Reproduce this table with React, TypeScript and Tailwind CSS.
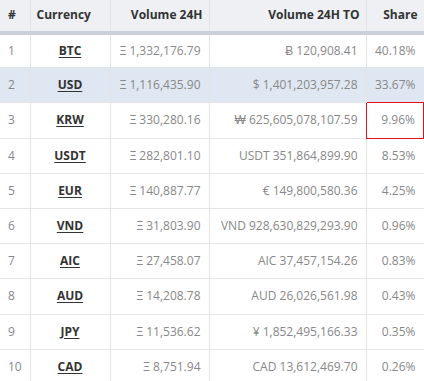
const rows = [
  { n: 1, cur: 'BTC', vol: 'Ξ 1,332,176.79', to: 'Ƀ 120,908.41', share: '40.18%' },
  { n: 2, cur: 'USD', vol: 'Ξ 1,116,435.90', to: '$ 1,401,203,957.28', share: '33.67%' },
  { n: 3, cur: 'KRW', vol: 'Ξ 330,280.16', to: '₩ 625,605,078,107.59', share: '9.96%' },
  { n: 4, cur: 'USDT', vol: 'Ξ 282,801.10', to: 'USDT 351,864,899.90', share: '8.53%' },
  { n: 5, cur: 'EUR', vol: 'Ξ 140,887.77', to: '€ 149,800,580.36', share: '4.25%' },
  { n: 6, cur: 'VND', vol: 'Ξ 31,803.90', to: 'VND 928,630,829,293.90', share: '0.96%' },
  { n: 7, cur: 'AIC', vol: 'Ξ 27,458.07', to: 'AIC 37,457,154.26', share: '0.83%' },
  { n: 8, cur: 'AUD', vol: 'Ξ 14,208.78', to: 'AUD 26,026,561.98', share: '0.43%' },
  { n: 9, cur: 'JPY', vol: 'Ξ 11,536.62', to: '¥ 1,852,495,166.33', share: '0.35%' },
  { n: 10, cur: 'CAD', vol: 'Ξ 8,751.94', to: 'CAD 13,612,469.70', share: '0.26%' },
]

export default function App() {
  return (
    <div className="w-[424px] h-[381px] overflow-hidden bg-white font-['Open_Sans',sans-serif] text-[12px]">
      <table className="w-full border-collapse table-fixed">
        <colgroup>
          <col className="w-[30px]" />
          <col className="w-[80px]" />
          <col className="w-[99px]" />
          <col className="w-[157px]" />
          <col />
        </colgroup>
        <thead>
          <tr className="h-[32.5px] bg-[#eef0f4] text-[#333] border-b-4 border-[#c9d0dc]">
            <th className="px-2 text-left font-bold">#</th>
            <th className="px-1.5 text-left font-bold border-l border-[#e2e4ea]">Currency</th>
            <th className="px-1.5 text-right font-bold border-l border-[#e2e4ea]">Volume 24H</th>
            <th className="px-1.5 text-right font-bold border-l border-[#e2e4ea]">Volume 24H TO</th>
            <th className="px-1.5 text-right font-bold border-l border-[#e2e4ea]">Share</th>
          </tr>
        </thead>
        <tbody className="text-[#888]">
          {rows.map((r) => (
            <tr key={r.n} className={`h-[35.2px] border-b border-[#e4e4e4] ${r.n === 2 ? 'bg-[#dfe7f2]' : ''}`}>
              <td className="px-2 text-left">{r.n}</td>
              <td className="px-1 text-center border-l border-[#e4e4e4]">
                <a className="font-bold text-[#333] underline underline-offset-2">{r.cur}</a>
              </td>
              <td className="px-2 text-right border-l border-[#e4e4e4] whitespace-nowrap">{r.vol}</td>
              <td className="px-2 text-right border-l border-[#e4e4e4] whitespace-nowrap">{r.to}</td>
              <td className={`px-2 text-right whitespace-nowrap ${r.n === 3 ? 'border border-[#e3101a]' : 'border-l border-[#e4e4e4]'}`}>{r.share}</td>
            </tr>
          ))}
        </tbody>
      </table>
    </div>
  )
}
